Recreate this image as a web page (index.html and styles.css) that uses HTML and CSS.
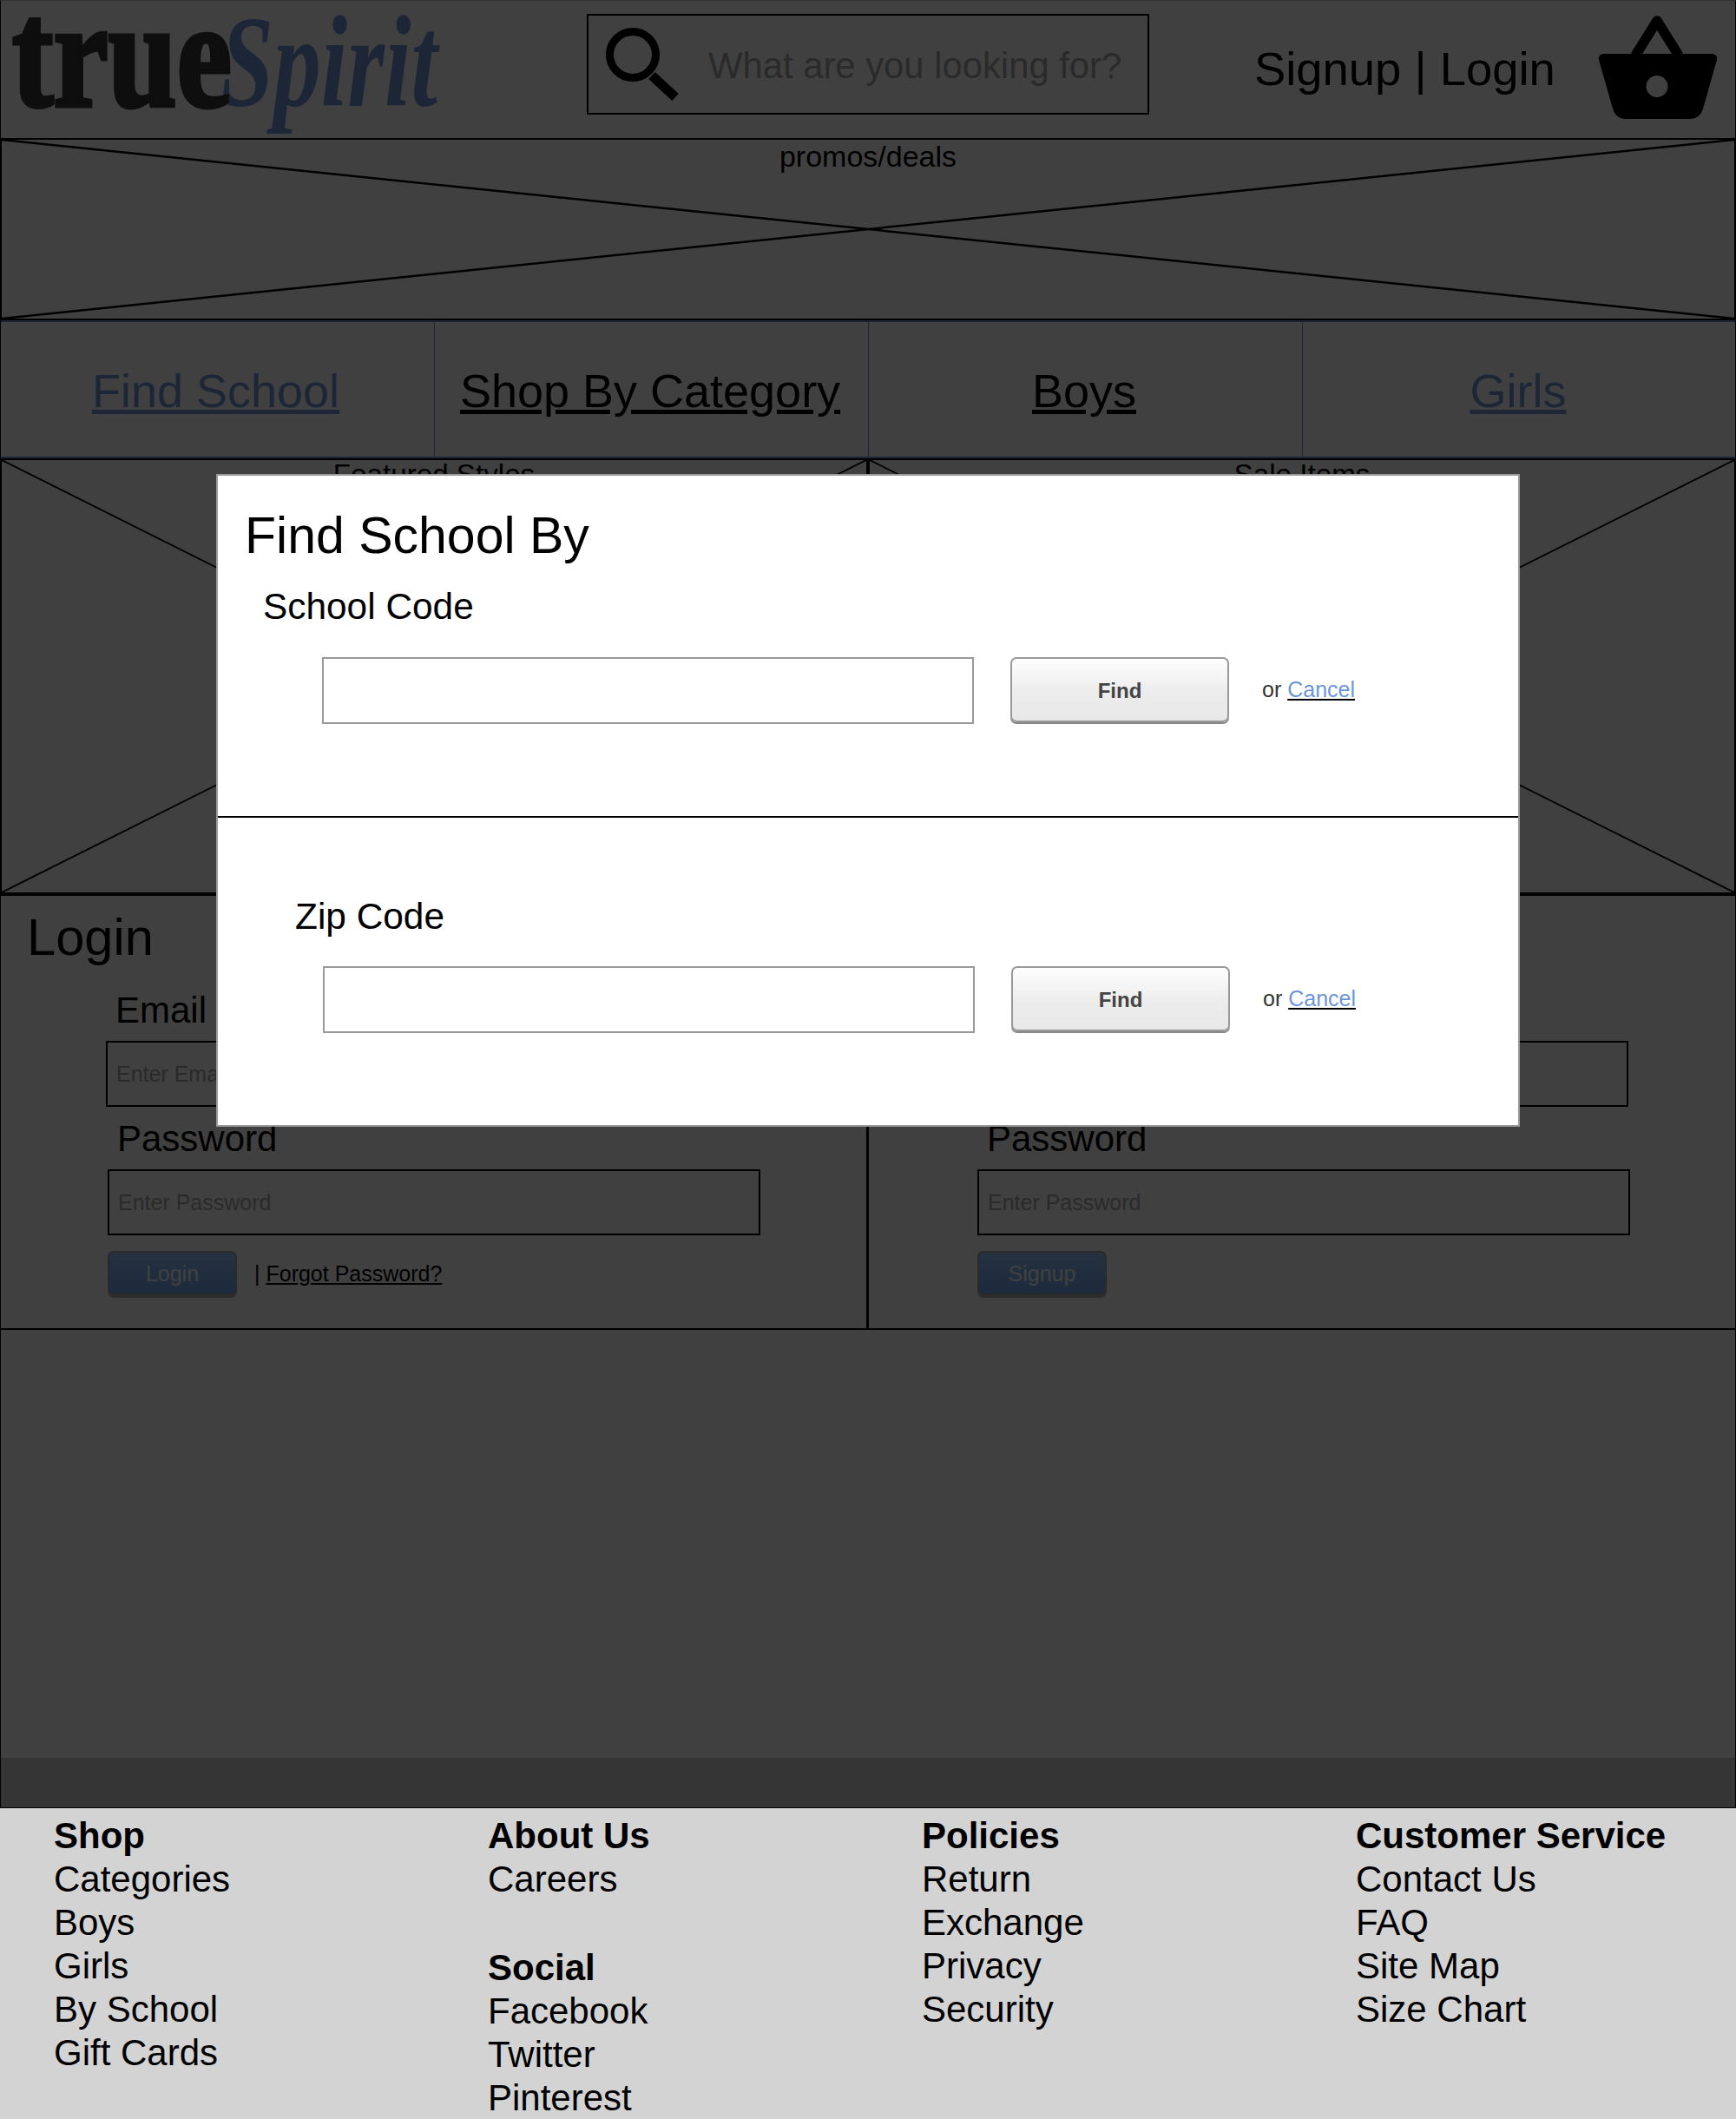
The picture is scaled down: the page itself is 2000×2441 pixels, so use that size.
FILE: index.html
```html
<!DOCTYPE html>
<html lang="en">
<head>
    <meta charset="UTF-8">
    <meta name="viewport" content="width=device-width, initial-scale=1.0">
    <title>True Spirit - Find School</title>
    <link rel="stylesheet" href="styles.css">
</head>
<body>

    <div class="page">
        <!-- Header -->
        <header class="site-header">
            <svg class="logo" viewBox="0 0 520 159" role="img" aria-label="True Spirit">
                <text class="logo-spirit" x="254" y="122" textLength="250" lengthAdjust="spacingAndGlyphs">Spirit</text>
                <text class="logo-true" x="14" y="122" textLength="253" lengthAdjust="spacingAndGlyphs">true</text>
            </svg>

            <div class="search-box">
                <svg class="search-icon" viewBox="0 0 84 84">
                    <circle cx="31" cy="31" r="26.5" fill="none" stroke="#000" stroke-width="9"/>
                    <path d="M53 55 L80 80" fill="none" stroke="#000" stroke-width="11"/>
                </svg>
                <input type="text" placeholder="What are you looking for?">
            </div>

            <div class="account-links">Signup | Login</div>

            <svg class="basket-icon" viewBox="0 0 138 120">
                <polyline points="43,47 68,7 93,47" fill="none" stroke="#000" stroke-width="11.5" stroke-linejoin="round"/>
                <path fill-rule="evenodd" d="M6 45 H132 A5.5 5.5 0 0 1 137 52 L121 108 A15 15 0 0 1 107 120 H31 A15 15 0 0 1 17 108 L1 52 A5.5 5.5 0 0 1 6 45 Z M68 70 A12.5 12.5 0 1 0 68 95 A12.5 12.5 0 1 0 68 70 Z"/>
            </svg>
        </header>

        <!-- Promo placeholder -->
        <section class="placeholder promo">
            <svg class="cross" viewBox="0 0 100 100" preserveAspectRatio="none">
                <line x1="0" y1="0" x2="100" y2="100"/>
                <line x1="0" y1="100" x2="100" y2="0"/>
            </svg>
            <p class="placeholder-title">promos/deals</p>
        </section>

        <!-- Main nav -->
        <nav class="main-nav">
            <a href="#" class="nav-link nav-link-blue">Find School</a>
            <a href="#" class="nav-link">Shop By Category</a>
            <a href="#" class="nav-link">Boys</a>
            <a href="#" class="nav-link nav-link-blue">Girls</a>
        </nav>

        <!-- Featured / sale placeholders -->
        <section class="feature-row">
            <div class="placeholder feature">
                <svg class="cross" viewBox="0 0 100 100" preserveAspectRatio="none">
                    <line x1="0" y1="0" x2="100" y2="100"/>
                    <line x1="0" y1="100" x2="100" y2="0"/>
                </svg>
                <p class="placeholder-title">Featured Styles</p>
            </div>
            <div class="placeholder feature">
                <svg class="cross" viewBox="0 0 100 100" preserveAspectRatio="none">
                    <line x1="0" y1="0" x2="100" y2="100"/>
                    <line x1="0" y1="100" x2="100" y2="0"/>
                </svg>
                <p class="placeholder-title">Sale Items</p>
            </div>
        </section>

        <!-- Login / signup -->
        <section class="auth-row">
            <div class="auth-col auth-login">
                <h2>Login</h2>
                <div class="field field-email">
                    <label>Email</label>
                    <input type="text" placeholder="Enter Email">
                </div>
                <div class="field">
                    <label>Password</label>
                    <input type="password" placeholder="Enter Password">
                </div>
                <div class="auth-actions">
                    <button class="blue-button">Login</button>
                    <span class="forgot">| <a href="#">Forgot Password?</a></span>
                </div>
            </div>
            <div class="auth-col auth-signup">
                <h2>Signup</h2>
                <div class="field field-email">
                    <label>Email</label>
                    <input type="text" placeholder="Enter Email">
                </div>
                <div class="field">
                    <label>Password</label>
                    <input type="password" placeholder="Enter Password">
                </div>
                <div class="auth-actions">
                    <button class="blue-button">Signup</button>
                </div>
            </div>
        </section>

        <div class="blank-area"></div>

        <!-- Footer -->
        <footer class="site-footer">
            <ul>
                <li class="footer-head">Shop</li>
                <li>Categories</li>
                <li>Boys</li>
                <li>Girls</li>
                <li>By School</li>
                <li>Gift Cards</li>
            </ul>
            <ul>
                <li class="footer-head">About Us</li>
                <li>Careers</li>
                <li class="footer-gap footer-head">Social</li>
                <li>Facebook</li>
                <li>Twitter</li>
                <li>Pinterest</li>
            </ul>
            <ul>
                <li class="footer-head">Policies</li>
                <li>Return</li>
                <li>Exchange</li>
                <li>Privacy</li>
                <li>Security</li>
            </ul>
            <ul>
                <li class="footer-head">Customer Service</li>
                <li>Contact Us</li>
                <li>FAQ</li>
                <li>Site Map</li>
                <li>Size Chart</li>
            </ul>
        </footer>
    </div>

    <!-- Dimmed page behind the dialog -->
    <div class="overlay"></div>

    <div class="modal">
        <div class="modal-section modal-school">
            <h1>Find School By</h1>
            <h3>School Code</h3>
            <div class="find-row">
                <input type="text">
                <button class="find-button">Find</button>
                <span class="cancel-text">or <a href="#">Cancel</a></span>
            </div>
        </div>
        <div class="modal-section modal-zip">
            <h3>Zip Code</h3>
            <div class="find-row">
                <input type="text">
                <button class="find-button">Find</button>
                <span class="cancel-text">or <a href="#">Cancel</a></span>
            </div>
        </div>
    </div>

</body>
</html>
```
FILE: styles.css
```css
* {
    box-sizing: border-box;
}

body {
    margin: 0;
    font-family: "Liberation Sans", Arial, sans-serif;
    color: #000;
    background-color: #fff;
}

.page {
    width: 2000px;
}

input {
    font-family: inherit;
    outline: none;
}

input::placeholder {
    color: #a9a9a9;
    opacity: 1;
}

/* Header */
.site-header {
    display: flex;
    align-items: center;
    height: 159px;
}

.logo {
    width: 520px;
    height: 159px;
    flex-shrink: 0;
}

.logo-true {
    font-family: "Liberation Serif", serif;
    font-weight: bold;
    font-size: 176px;
    fill: #383838;
    stroke: #383838;
    stroke-width: 5px;
}

.logo-spirit {
    font-family: "Liberation Serif", serif;
    font-style: italic;
    font-weight: bold;
    font-size: 150px;
    fill: #7299d9;
}

.search-box {
    display: flex;
    align-items: center;
    width: 648px;
    height: 116px;
    margin-left: 156px;
    margin-bottom: 11px;
    padding-left: 20px;
    border: 2px solid #000;
}

.search-icon {
    width: 84px;
    height: 84px;
    flex-shrink: 0;
}

.search-box input {
    flex-grow: 1;
    min-width: 0;
    margin-left: 34px;
    margin-top: 3px;
    padding: 0;
    border: none;
    background: none;
    font-size: 41.8px;
}

.account-links {
    margin-left: 121px;
    font-size: 54.4px;
    white-space: nowrap;
}

.basket-icon {
    width: 138px;
    height: 120px;
    margin-left: auto;
    margin-right: 21px;
    margin-bottom: 5px;
}

/* Wireframe placeholders */
.placeholder {
    position: relative;
    border: 2px solid #000;
}

.placeholder-title {
    margin: 0;
    font-size: 34px;
    line-height: 39px;
    text-align: center;
}

.feature .placeholder-title {
    font-size: 33.2px;
    line-height: 33px;
}

.cross {
    position: absolute;
    top: 0;
    left: 0;
    width: 100%;
    height: 100%;
}

.cross line {
    stroke: #000;
    stroke-width: 2px;
    vector-effect: non-scaling-stroke;
}

.promo {
    height: 210px;
}

.promo .cross line {
    stroke-width: 2.5px;
}

/* Nav */
.main-nav {
    display: grid;
    grid-template-columns: repeat(4, 1fr);
    height: 159px;
    border-top: 2px solid #7299d9;
    border-bottom: 2px solid #7299d9;
}

.nav-link {
    display: flex;
    justify-content: center;
    align-items: center;
    padding-top: 2px;
    padding-right: 3px;
    font-size: 54px;
    color: #000;
    border-left: 1px solid #7299d9;
}

.nav-link:first-child {
    border-left: none;
}

.nav-link-blue {
    color: #7299d9;
}

/* Featured row */
.feature-row {
    display: grid;
    grid-template-columns: 1fr 1fr;
    height: 502px;
}

/* Login and signup */
.auth-row {
    display: grid;
    grid-template-columns: 1fr 1fr;
    height: 502px;
    border-top: 2px solid #000;
    border-bottom: 2px solid #000;
}

.auth-col {
    padding-top: 15px;
}

.auth-login {
    border-right: 2px solid #000;
}

.auth-signup {
    border-left: 1px solid #000;
}

.auth-col h2 {
    margin: 0 0 26px 31px;
    font-size: 59.6px;
    font-weight: normal;
    line-height: 66px;
}

.field {
    margin-left: 124px;
    margin-bottom: 18px;
}

.field-email {
    margin-left: 122px;
    margin-bottom: 12px;
}

.auth-signup .field {
    margin-left: 125px;
}

.auth-signup .field-email {
    margin-left: 123px;
}

.field label {
    display: block;
    margin-left: 11px;
    margin-bottom: 10px;
    font-size: 42px;
    line-height: 50px;
}

.field input {
    display: block;
    width: 752px;
    height: 76px;
    padding: 0 10px;
    border: 2px solid #000;
    background: none;
    font-size: 25px;
}

.field:not(.field-email) input {
    height: 76px;
    padding-top: 1px;
}

.auth-actions {
    display: flex;
    align-items: center;
    margin-left: 124px;
}

.auth-signup .auth-actions {
    margin-left: 125px;
}

.blue-button {
    width: 149px;
    height: 51px;
    padding-top: 3px;
    border: 2px solid #a8a8a8;
    border-radius: 7px;
    background: linear-gradient(#94c4ff, #70a8f0);
    box-shadow: 0 3px 0 #b0b0b0;
    color: #fff;
    font-family: inherit;
    font-size: 25px;
}

.forgot {
    margin-left: 20px;
    margin-top: 1px;
    font-size: 25px;
}

.forgot a {
    color: #000;
}

.blank-area {
    height: 493px;
}

/* Footer */
.site-footer {
    display: grid;
    grid-template-columns: repeat(4, 1fr);
    height: 417px;
    padding-top: 65px;
    background-color: #d3d3d3;
}

.site-footer ul {
    margin: 0;
    padding: 0 0 0 62px;
    list-style: none;
    font-size: 42px;
    line-height: 50px;
}

.footer-head {
    font-weight: bold;
}

.footer-gap {
    margin-top: 52px;
}

/* Dialog */
.overlay {
    position: absolute;
    top: 0;
    left: 0;
    width: 2000px;
    height: 2083px;
    background-color: rgba(0, 0, 0, 0.75);
    border: 1px solid #000;
    border-top-color: #333;
}

.modal {
    position: absolute;
    top: 546px;
    left: 249px;
    width: 1502px;
    height: 752px;
    background-color: #fff;
    border: 2px solid #999;
}

.modal-section {
    padding-left: 120px;
}

.modal-school {
    height: 394px;
    padding-top: 36px;
    border-bottom: 2px solid #000;
}

.modal-zip {
    padding-top: 89px;
    padding-left: 121px;
}

.modal h1 {
    margin: 0 0 24px -89px;
    font-size: 59px;
    font-weight: normal;
    line-height: 66px;
}

.modal h3 {
    margin: 0 0 33px -68px;
    font-size: 42.4px;
    font-weight: normal;
    line-height: 50px;
}

.modal-zip h3 {
    margin-left: -32px;
    margin-bottom: 32px;
}

.find-row {
    display: flex;
    align-items: flex-start;
}

.find-row input {
    width: 751px;
    height: 77px;
    border: 2px solid #999;
    background-color: #fff;
}

.find-button {
    width: 252px;
    height: 75px;
    margin-left: 42px;
    padding-top: 3px;
    border: 2px solid #999;
    border-radius: 7px;
    background: linear-gradient(#fefefe, #ececec 55%, #e8e8e8);
    box-shadow: 0 2px 0 #888;
    color: #444;
    font-family: inherit;
    font-size: 24px;
    font-weight: bold;
}

.cancel-text {
    align-self: center;
    margin-left: 38px;
    margin-bottom: 2px;
    font-size: 25px;
    color: #333;
}

.cancel-text a {
    color: #6d96d8;
    text-decoration-color: #000;
}
```
